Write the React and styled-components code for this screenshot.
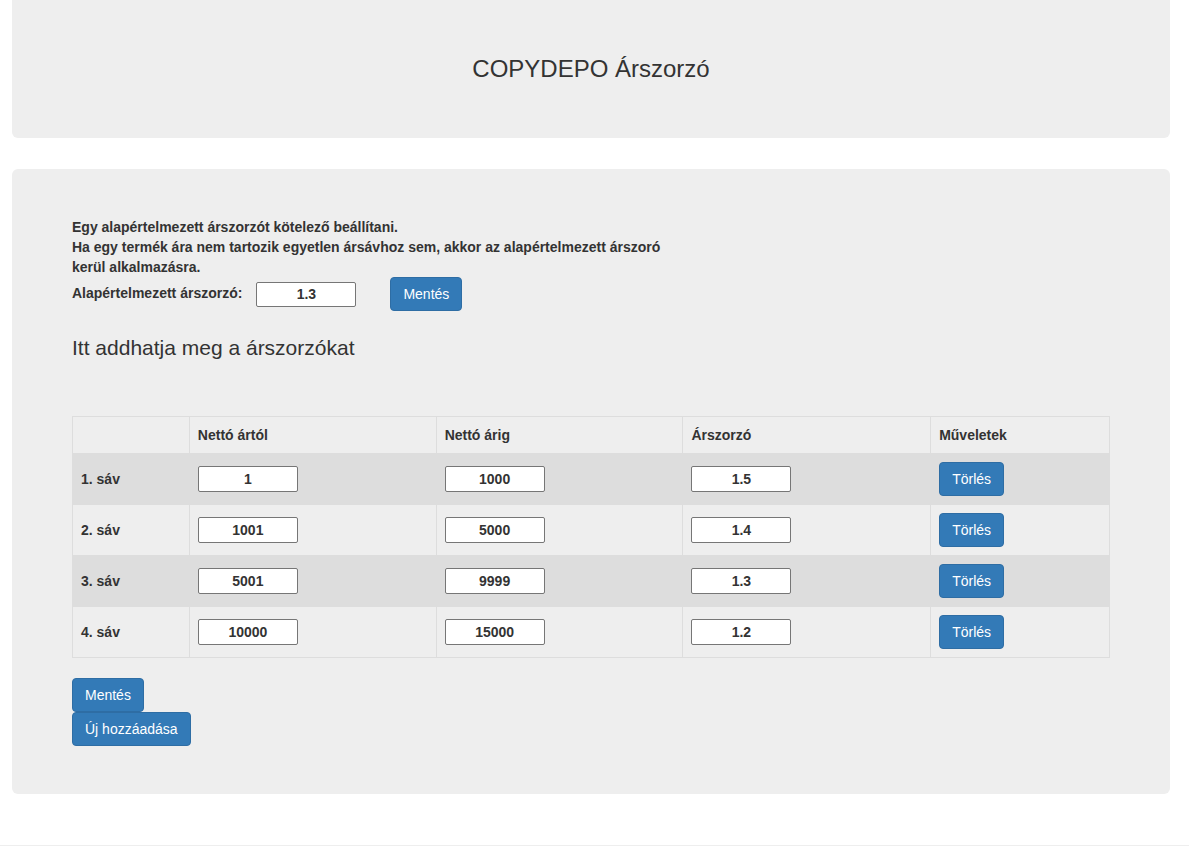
import React from "react";
import styled, { createGlobalStyle } from "styled-components";

const Global = createGlobalStyle`
  html, body { margin: 0; padding: 0; background: #fff; }
  body {
    font-family: "Liberation Sans", Arial, sans-serif;
    font-size: 14px;
    line-height: 1.42857;
    color: #333;
  }
  * { box-sizing: border-box; }
`;

const Page = styled.div`
  width: 1189px;
  padding-bottom: 5px;
`;

const HeaderPanel = styled.header`
  margin: 0 19px 31px 12px;
  height: 138px;
  background: #eee;
  border-radius: 0 0 6px 6px;
  display: flex;
  align-items: center;
  justify-content: center;
`;

const Title = styled.h1`
  margin: 0;
  font-size: 24px;
  font-weight: 400;
  line-height: 1.1;
  color: #333;
`;

const MainPanel = styled.main`
  margin: 0 19px 0 12px;
  background: #eee;
  border-radius: 6px;
  padding: 48px 60px 48px;
`;

const Notice = styled.p`
  margin: 0;
  max-width: 600px;
  font-weight: 700;
  line-height: 20px;
`;

const DefaultRow = styled.div`
  display: flex;
  align-items: center;
`;

const Label = styled.label`
  font-weight: 700;
  margin-right: 14px;
`;

const NumInput = styled.input`
  width: 100px;
  height: ${(p) => (p.$h ? p.$h : 26)}px;
  border: 1px solid #767676;
  border-radius: 2px;
  background: #fff;
  font-family: "Liberation Sans", Arial, sans-serif;
  font-size: 14px;
  font-weight: 700;
  color: #333;
  text-align: center;
  padding: 0 2px;
  display: block;
`;

const Button = styled.button`
  display: inline-block;
  height: 34px;
  padding: 6px 12px;
  font-family: "Liberation Sans", Arial, sans-serif;
  font-size: 14px;
  line-height: 20px;
  color: #fff;
  background: #337ab7;
  border: 1px solid #2e6da4;
  border-radius: 4px;
  cursor: pointer;
  margin-left: ${(p) => p.$ml || 0}px;
`;

const Subtitle = styled.h3`
  margin: 25px 0 57px;
  font-size: 21px;
  font-weight: 400;
  line-height: 23px;
  color: #333;
`;

const Table = styled.table`
  width: 100%;
  border-collapse: collapse;
  border: 1px solid #ddd;
  margin-bottom: 20px;
`;

const Th = styled.th`
  text-align: left;
  font-weight: 700;
  padding: 8px;
  line-height: 20px;
  border: 1px solid #ddd;
  vertical-align: middle;
`;

const Tr = styled.tr`
  background: ${(p) => (p.$odd ? "#ddd" : "#eee")};
`;

const Td = styled.td`
  padding: 8px;
  line-height: 20px;
  border: 1px solid #ddd;
  vertical-align: middle;
  font-weight: ${(p) => (p.$bold ? 700 : 400)};
`;

const Actions = styled.div`
  display: flex;
  flex-direction: column;
  align-items: flex-start;
`;

const Footer = styled.hr`
  margin: 51px 0 0;
  border: 0;
  border-top: 1px solid #eee;
`;

const rows = [
  ["1", "1000", "1.5"],
  ["1001", "5000", "1.4"],
  ["5001", "9999", "1.3"],
  ["10000", "15000", "1.2"],
];

export default function App() {
  return (
    <Page>
      <Global />
      <HeaderPanel>
        <Title>COPYDEPO Árszorzó</Title>
      </HeaderPanel>
      <MainPanel>
        <Notice>
          Egy alapértelmezett árszorzót kötelező beállítani.
          <br />
          Ha egy termék ára nem tartozik egyetlen ársávhoz sem, akkor az alapértelmezett árszoró kerül alkalmazásra.
        </Notice>
        <DefaultRow>
          <Label>Alapértelmezett árszorzó:</Label>
          <NumInput $h={25} defaultValue="1.3" />
          <Button $ml={34}>Mentés</Button>
        </DefaultRow>
        <Subtitle>Itt addhatja meg a árszorzókat</Subtitle>
        <Table>
          <colgroup>
            <col style={{ width: 117 }} />
            <col style={{ width: 247 }} />
            <col style={{ width: 247 }} />
            <col style={{ width: 248 }} />
            <col style={{ width: 179 }} />
          </colgroup>
          <thead>
            <tr>
              <Th></Th>
              <Th>Nettó ártól</Th>
              <Th>Nettó árig</Th>
              <Th>Árszorzó</Th>
              <Th>Műveletek</Th>
            </tr>
          </thead>
          <tbody>
            {rows.map((r, i) => (
              <Tr key={i} $odd={i % 2 === 0}>
                <Td $bold>{i + 1}. sáv</Td>
                <Td><NumInput defaultValue={r[0]} /></Td>
                <Td><NumInput defaultValue={r[1]} /></Td>
                <Td><NumInput defaultValue={r[2]} /></Td>
                <Td><Button>Törlés</Button></Td>
              </Tr>
            ))}
          </tbody>
        </Table>
        <Actions>
          <Button>Mentés</Button>
          <Button>Új hozzáadása</Button>
        </Actions>
      </MainPanel>
      <Footer />
    </Page>
  );
}
